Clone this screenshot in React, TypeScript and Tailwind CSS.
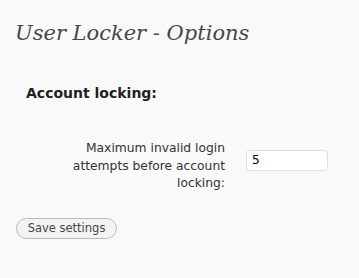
export default function App() {
  return (
    <div className="w-[359px] h-[278px] bg-[#f9f9f9] text-[#333]" style={{ fontFamily: '"DejaVu Sans", Verdana, sans-serif' }}>
      <div className="pt-[18px] pl-[15px]">
        <h2 className="text-[21px] leading-[30px] italic text-[#464646]" style={{ fontFamily: '"DejaVu Serif", Georgia, serif' }}>
          User Locker - Options
        </h2>
      </div>
      <h3 className="mt-[37px] ml-[26px] text-[14px] font-bold leading-[16px] text-[#222]">Account locking:</h3>
      <div className="mt-[39px] flex items-start">
        <div className="w-[225px] pl-[50px] text-right text-[12.3px] leading-[17.5px] text-[#333]">
          Maximum invalid login attempts before account locking:
        </div>
        <div className="ml-[21px] mt-[7px]">
          <input
            defaultValue="5"
            className="w-[82px] h-[21px] border border-[#dfdfdf] rounded-[4px] bg-white px-[5px] text-[12px] text-black outline-none"
          />
        </div>
      </div>
      <button className="ml-[16px] mt-[25px] w-[101px] h-[21px] rounded-full border border-[#bbb] bg-[#f3f3f3] text-[11.5px] leading-[19px] text-[#464646]">
        Save settings
      </button>
    </div>
  );
}
